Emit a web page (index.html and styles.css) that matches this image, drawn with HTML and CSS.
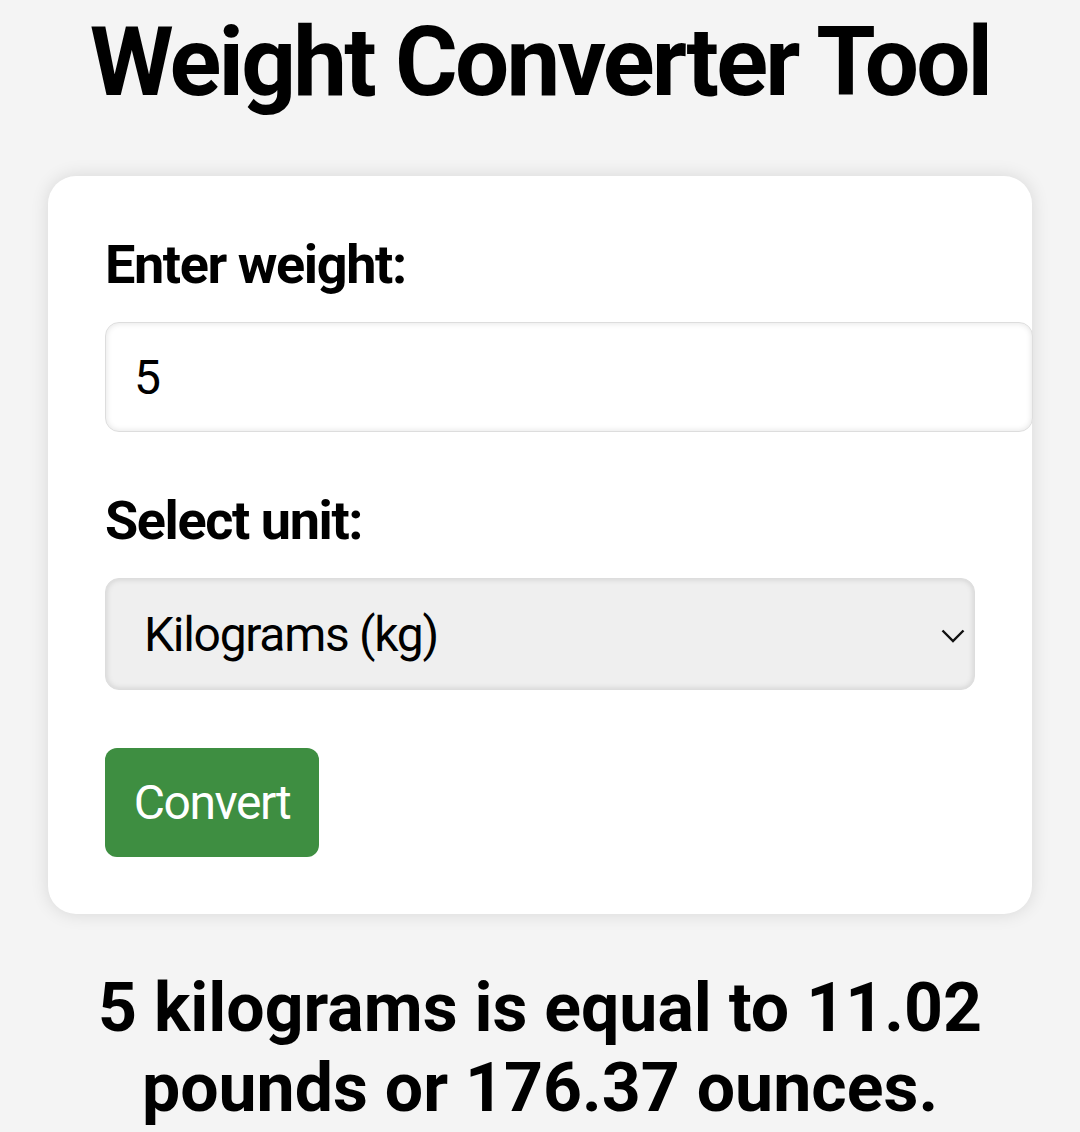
FILE: index.html
```html
<!DOCTYPE html>
<html lang="en">
<head>
    <meta charset="UTF-8">
    <meta name="viewport" content="width=device-width, initial-scale=1.0">
    <title>Weight Converter Tool</title>
    <link rel="stylesheet" href="styles.css">
</head>
<body>
    <h1>Weight Converter Tool</h1>

    <div class="converter">
        <label for="weight">Enter weight:</label>
        <input type="number" id="weight" value="5">

        <label for="unit">Select unit:</label>
        <div class="select-wrap">
            <select id="unit">
                <option value="kg" selected>Kilograms (kg)</option>
                <option value="lb">Pounds (lb)</option>
                <option value="oz">Ounces (oz)</option>
            </select>
            <svg class="chevron" viewBox="0 0 24 14" width="24" height="14" aria-hidden="true">
                <path d="M1.5 1.5 L12 12 L22.5 1.5" fill="none" stroke="#111" stroke-width="2.4"/>
            </svg>
        </div>

        <button class="convert-btn">Convert</button>
    </div>

    <p class="result">5 kilograms is equal to 11.02 pounds or 176.37 ounces.</p>
</body>
</html>
```

FILE: styles.css
```css
body {
    font-family: Roboto, "Noto Sans", sans-serif;
    background-color: #f4f4f4;
    color: #000;
    margin: 0;
    padding: 0 48px;
}

h1 {
    font-size: 96px;
    font-weight: 700;
    letter-spacing: -0.029em;
    text-align: center;
    margin: 6px 0 58px;
}

.converter {
    background-color: #fff;
    padding: 57px;
    border-radius: 28px;
    box-shadow: 0 0 18px rgba(0, 0, 0, 0.12);
}

label {
    display: block;
    font-size: 54px;
    font-weight: 700;
    letter-spacing: -0.026em;
    margin-bottom: 26px;
}

input {
    display: block;
    width: 100%;
    height: 108px;
    padding: 0 28px;
    font-family: Roboto, sans-serif;
    font-size: 48px;
    color: #000;
    background-color: #fff;
    border: 1px solid #ddd;
    border-radius: 14px;
    box-shadow: inset 0 0 6px rgba(0, 0, 0, 0.12);
    margin: 0 0 57px;
    outline: none;
}

.select-wrap {
    position: relative;
    margin-bottom: 58px;
}

select {
    display: block;
    width: 100%;
    height: 112px;
    padding: 0 38px;
    font-family: Roboto, sans-serif;
    font-size: 48px;
    letter-spacing: -0.027em;
    color: #000;
    background-color: #efefef;
    border: 1px solid #ddd;
    border-radius: 14px;
    box-shadow: inset 0 0 6px rgba(0, 0, 0, 0.15);
    appearance: none;
    -webkit-appearance: none;
}

.chevron {
    position: absolute;
    right: 10px;
    top: 50%;
    margin-top: -5px;
    pointer-events: none;
}

.convert-btn {
    display: block;
    width: 214px;
    height: 109px;
    font-family: Roboto, sans-serif;
    font-size: 48px;
    letter-spacing: -0.03em;
    color: #fff;
    background-color: #3e8e41;
    border: none;
    border-radius: 12px;
}

.result {
    font-size: 68px;
    font-weight: 700;
    text-align: center;
    margin: 54px 0 0;
}
```
